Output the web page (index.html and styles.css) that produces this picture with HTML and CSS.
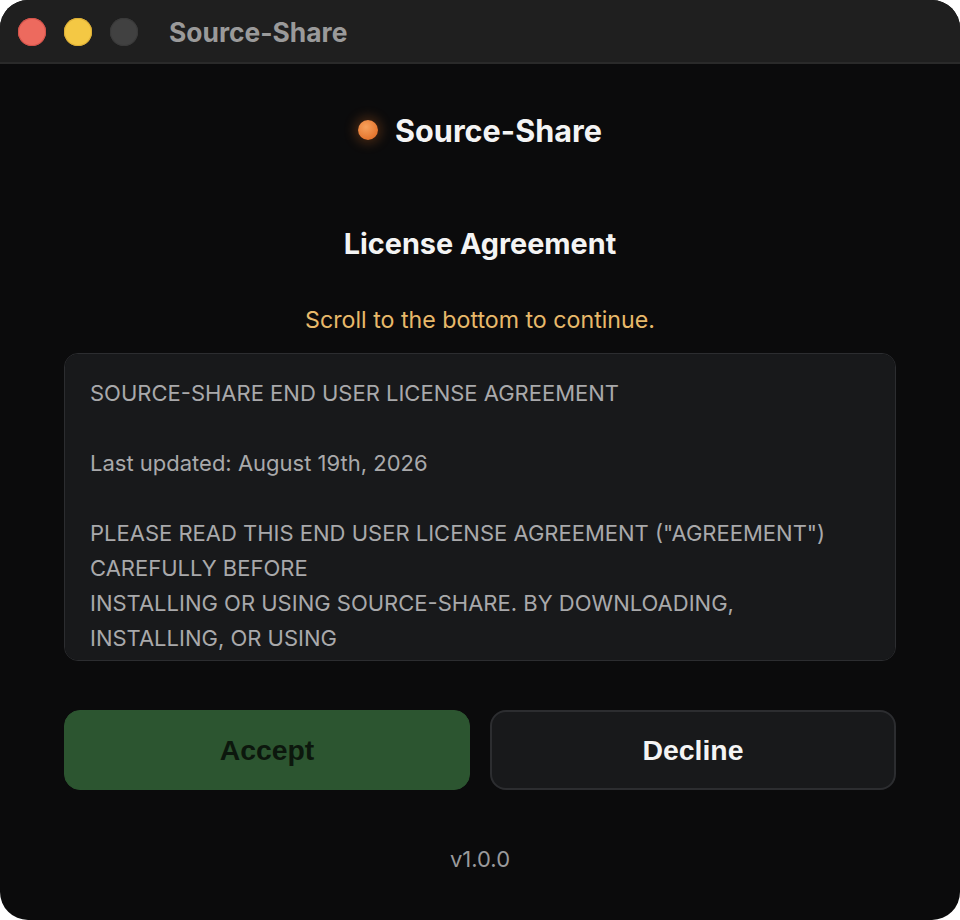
FILE: index.html
```html
<!DOCTYPE html>
<html lang="en">
<head>
<meta charset="utf-8">
<title>Source-Share</title>
<link rel="stylesheet" href="styles.css">
</head>
<body>
<div class="window">
  <header class="titlebar">
    <div class="lights">
      <span class="light red"></span>
      <span class="light yellow"></span>
      <span class="light gray"></span>
    </div>
    <div class="wintitle">Source-Share</div>
  </header>
  <main class="content">
    <div class="brand">
      <span class="dot"></span>
      <span class="brand-name">Source-Share</span>
    </div>
    <h1 class="heading">License Agreement</h1>
    <p class="hint">Scroll to the bottom to continue.</p>
    <div class="license">SOURCE-SHARE END USER LICENSE AGREEMENT

Last updated: August 19th, 2026

PLEASE READ THIS END USER LICENSE AGREEMENT ("AGREEMENT")
CAREFULLY BEFORE
INSTALLING OR USING SOURCE-SHARE. BY DOWNLOADING,
INSTALLING, OR USING
SOURCE-SHARE, YOU AGREE TO BE BOUND BY THE TERMS OF THIS
AGREEMENT.</div>
    <div class="actions">
      <button class="btn accept">Accept</button>
      <button class="btn decline">Decline</button>
    </div>
    <div class="version">v1.0.0</div>
  </main>
</div>
</body>
</html>
```

FILE: styles.css
```css
* { box-sizing: border-box; }
html, body {
  margin: 0;
  padding: 0;
  background: #ffffff;
}
body {
  width: 960px;
  height: 920px;
  font-family: Inter, "Noto Sans", sans-serif;
}
.window {
  width: 960px;
  height: 920px;
  border-radius: 28px;
  overflow: hidden;
  background: #0b0b0c;
  display: flex;
  flex-direction: column;
}
.titlebar {
  height: 64px;
  flex: 0 0 64px;
  background: #1f1f1f;
  border-bottom: 2px solid #2a2a2a;
  display: flex;
  align-items: center;
  padding: 2px 0 0 18px;
}
.lights {
  display: flex;
  gap: 18px;
}
.light {
  width: 28px;
  height: 28px;
  border-radius: 50%;
  display: block;
}
.red { background: #ed6a5e; box-shadow: inset 0 0 0 1px #d3524a; }
.yellow { background: #f4c844; box-shadow: inset 0 0 0 1px #dcae36; }
.gray { background: #414141; box-shadow: inset 0 0 0 1px #3a3a3a; }
.wintitle {
  margin-left: 31px;
  color: #9a9a9a;
  font-weight: 700;
  font-size: 26.4px;
}
.content {
  flex: 1;
  display: flex;
  flex-direction: column;
  align-items: center;
  padding: 46px 64px 0;
}
.brand {
  height: 40px;
  display: flex;
  align-items: center;
  gap: 17px;
}
.dot {
  width: 20px;
  height: 20px;
  border-radius: 50%;
  background: radial-gradient(circle at 40% 35%, #f7a15c, #e5762f 70%, #d9692a);
  box-shadow: 0 0 12px 3px rgba(235, 120, 40, 0.28);
}
.brand-name {
  color: #f4f4f4;
  font-weight: 700;
  font-size: 30.6px;
}
.heading {
  margin: 76px 0 0;
  height: 36px;
  line-height: 36px;
  font-size: 28.8px;
  font-weight: 700;
  color: #f4f4f4;
}
.hint {
  margin: 44px 0 0;
  height: 28px;
  line-height: 28px;
  font-size: 23.2px;
  color: #e8b96a;
}
.license {
  margin-top: 19px;
  width: 100%;
  height: 308px;
  overflow-y: auto;
  scrollbar-width: none;
  background: #18191b;
  border: 1px solid #2c2d30;
  border-radius: 14px;
  padding: 22px 25px;
  white-space: pre-line;
  color: #a9a9ab;
  font-size: 22px;
  line-height: 35px;
}
.license::-webkit-scrollbar { display: none; }
.actions {
  margin-top: 49px;
  width: 100%;
  display: grid;
  grid-template-columns: 1fr 1fr;
  gap: 20px;
}
.btn {
  height: 80px;
  border-radius: 16px;
  font-family: "Liberation Sans", Arial, sans-serif;
  font-weight: 700;
  font-size: 28.4px;
}
.accept {
  background: #2c5530;
  border: 1px solid #2c5530;
  color: #0c170d;
}
.decline {
  background: #18191b;
  border: 2px solid #2c2d30;
  color: #f4f4f4;
}
.version {
  margin-top: 55px;
  height: 28px;
  line-height: 28px;
  font-size: 22px;
  color: #9a9a9c;
}
```
